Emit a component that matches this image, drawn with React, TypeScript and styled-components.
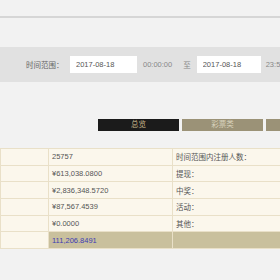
import React from "react";
import styled, { createGlobalStyle } from "styled-components";

const GlobalStyle = createGlobalStyle`
  html, body {
    margin: 0;
    padding: 0;
    background: #f2f2f2;
    overflow: hidden;
  }
  body {
    font-family: "Liberation Sans", "Noto Sans CJK SC", sans-serif;
  }
`;

const rows = [
  { value: "25757", label: "时间范围内注册人数：" },
  { value: "¥613,038.0800", label: "提现：" },
  { value: "¥2,836,348.5720", label: "中奖：" },
  { value: "¥87,567.4539", label: "活动：" },
  { value: "¥0.0000", label: "其他：" },
];

const App: React.FC = () => {
  return (
    <Page>
      <GlobalStyle />
      <TopBar />
      <FilterBar>
        <FilterLabel>时间范围：</FilterLabel>
        <DateInput value="2017-08-18" readOnly />
        <TimeText>00:00:00</TimeText>
        <ToText>至</ToText>
        <DateInput value="2017-08-18" readOnly $narrow />
        <TimeText $gap={5}>23:59:59</TimeText>
      </FilterBar>
      <TabRow>
        <Tab $active>总览</Tab>
        <Tab>彩票类</Tab>
        <Tab>真人类</Tab>
      </TabRow>
      <Table>
        <colgroup>
          <col style={{ width: 48 }} />
          <col style={{ width: 124 }} />
          <col />
        </colgroup>
        <tbody>
          {rows.map((r) => (
            <tr key={r.label}>
              <Cell />
              <Cell>{r.value}</Cell>
              <Cell>{r.label}</Cell>
            </tr>
          ))}
          <tr>
            <Cell />
            <Cell $total>
              <TotalLink>111,206.8491</TotalLink>
            </Cell>
            <Cell $total />
          </tr>
        </tbody>
      </Table>
    </Page>
  );
};

export default App;

const Page = styled.div`
  width: 480px;
  min-height: 280px;
  background: #f2f2f2;
`;

const TopBar = styled.div`
  height: 16px;
  border-bottom: 2px solid #d6d6d6;
  margin-bottom: 29px;
`;

const FilterBar = styled.div`
  display: flex;
  align-items: center;
  height: 35px;
  background: #e1e1e1;
  padding-left: 26px;
  font-size: 7.5px;
  color: #666;
`;

const FilterLabel = styled.span`
  width: 44px;
  white-space: nowrap;
`;

const DateInput = styled.input<{ $narrow?: boolean }>`
  box-sizing: border-box;
  width: ${(p) => (p.$narrow ? 64 : 67)}px;
  height: 17px;
  border: none;
  outline: none;
  background: #fff;
  padding: 0 0 0 6px;
  font-family: "Liberation Sans", sans-serif;
  font-size: 7.5px;
  color: #555;
`;

const TimeText = styled.span<{ $gap?: number }>`
  margin-left: ${(p) => p.$gap ?? 6}px;
  color: #888;
  white-space: nowrap;
`;

const ToText = styled.span`
  margin-left: 11px;
  margin-right: 6px;
  color: #888;
`;

const TabRow = styled.div`
  display: flex;
  gap: 3px;
  padding-left: 98px;
  margin-top: 37px;
`;

const Tab = styled.div<{ $active?: boolean }>`
  width: 81px;
  height: 12px;
  line-height: 12px;
  text-align: center;
  font-size: 7.5px;
  background: ${(p) => (p.$active ? "#1b1b1b" : "#9b9277")};
  color: ${(p) => (p.$active ? "#c9b88e" : "#d9d2bd")};
`;

const Table = styled.table`
  margin-top: 17px;
  width: 480px;
  table-layout: fixed;
  border-collapse: collapse;
  font-size: 7.5px;
  color: #555;
`;

const Cell = styled.td<{ $total?: boolean }>`
  height: 15.7px;
  padding: 0 0 0 3px;
  border: 1px solid #e9e0c8;
  background: ${(p) => (p.$total ? "#c9c09d" : "#fbf7ec")};
  white-space: nowrap;
`;

const TotalLink = styled.span`
  color: #3c3cb4;
`;
